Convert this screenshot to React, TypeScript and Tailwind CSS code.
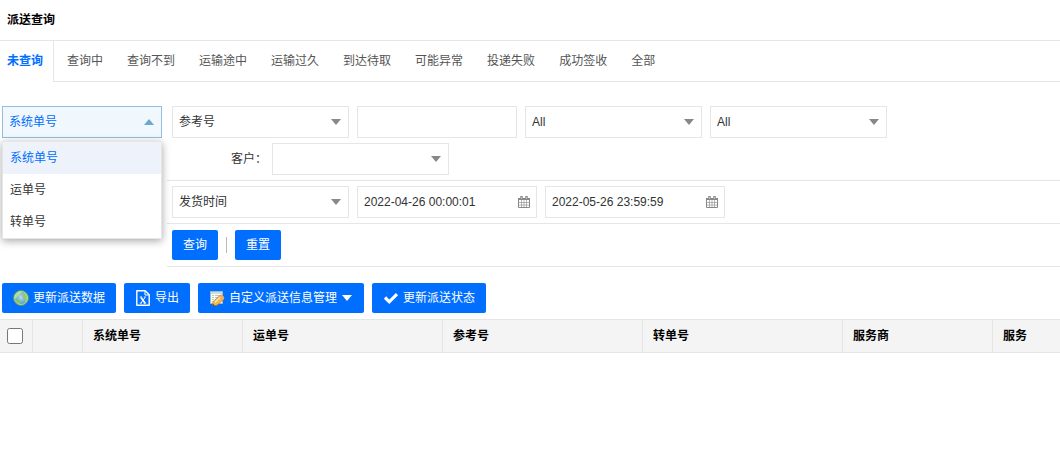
import React, { useState } from 'react';
import clsx from 'clsx';

const TABS = [
  '未查询',
  '查询中',
  '查询不到',
  '运输途中',
  '运输过久',
  '到达待取',
  '可能异常',
  '投递失败',
  '成功签收',
  '全部'
];

const ORDER_TYPES = ['系统单号', '运单号', '转单号'];

const COLUMNS = [
  { label: '系统单号', width: 'w-40' },
  { label: '运单号', width: 'w-[200px]' },
  { label: '参考号', width: 'w-[200px]' },
  { label: '转单号', width: 'w-[200px]' },
  { label: '服务商', width: 'w-[150px]' },
  { label: '服务', width: '' }
];

function Triangle({ up = false, className }: { up?: boolean; className?: string }) {
  return (
    <svg viewBox="0 0 10 6" className={clsx('w-2.5 h-1.5', className)} fill="currentColor" aria-hidden="true">
      <path d={up ? 'M5 0 10 6H0z' : 'M0 0h10L5 6z'} />
    </svg>
  );
}

function CalendarIcon() {
  return (
    <svg viewBox="0 0 12 12" className="size-3 text-[#888]" fill="none" stroke="currentColor" aria-hidden="true">
      <path d="M.5 2.5h11v9H.5z" />
      <path d="M0 3h12" strokeWidth="2" />
      <path d="M3.5 0v3M8.5 0v3" strokeWidth="2.4" />
      <path d="M3.5 1v2M8.5 1v2" stroke="#ddd" strokeWidth=".6" />
      <path d="M3.5 4v7.5M6 4v7.5M8.5 4v7.5M1 6.5h10M1 9h10" strokeWidth=".6" />
    </svg>
  );
}

function GlobeIcon() {
  return (
    <svg viewBox="0 0 16 16" className="size-4" aria-hidden="true">
      <defs>
        <radialGradient id="globe-sea" cx=".5" cy=".45" r=".6">
          <stop offset="0" stopColor="#b5dcf0" />
          <stop offset=".65" stopColor="#64a9cc" />
          <stop offset="1" stopColor="#3f88a0" />
        </radialGradient>
      </defs>
      <circle cx="8" cy="8" r="7.5" fill="url(#globe-sea)" stroke="#5c9a5a" />
      <path d="M2 5 4.5 2.2l3.600-.8.6 1.600-2 1.200-.6 1.800-2 .4-.8 1.600L1.700 9z" fill="#b3dc98" />
      <path d="m9.800 3.800 2.500-1 2 3 .4 3-1.500 3.500-1.200-.8-.5-2.500-1.700-.8-.6-2z" fill="#90cb76" />
      <path d="m3.200 9.500 2.800.2 1.700 1.600-1 2.900-2.200-.8-1.800-2.400z" fill="#86c46c" />
      <circle cx="8" cy="8" r="6.500" fill="none" stroke="#c9ecb4" strokeWidth=".9" opacity=".8" />
    </svg>
  );
}

function ExcelIcon() {
  return (
    <svg viewBox="0 0 16 16" className="size-4" fill="none" stroke="#fff" aria-hidden="true">
      <path d="M1.800.8h8.400l4 4v10.400H1.800z" strokeWidth="1.400" strokeLinejoin="round" />
      <path d="M10 1v4h4" strokeWidth="1" />
      <path d="m6 7.500 4 5.500" strokeWidth="1.700" />
      <path d="M10 7.500 6 13" strokeWidth="1" />
      <path d="M4.800 7h2.400M8.900 7h2M4.800 13.200h2M8.700 13.200h2.500" strokeWidth=".9" />
    </svg>
  );
}

function FormEditIcon() {
  return (
    <svg viewBox="0 0 16 16" className="size-4" aria-hidden="true">
      <path d="M1.500 1.500h12v12h-12z" fill="#f7faf8" stroke="#a5b8c0" />
      <path d="M2 2h11v2H2z" fill="#c9dde6" />
      <path d="M3 5.500h2M6 5.500h6M3 7.500h2M6 7.500h6M3 9.500h2M6 9.500h3M3 11.500h1" stroke="#b6cbbb" />
      <path d="M4 12 10.800 5.500q1.900-1.200 3.400.4t.6 3.300L8 15.300l-4.400.5z" fill="#f4b94a" stroke="#b07a35" strokeWidth=".7" />
      <path d="m5.700 12.500 6.100-5.700" stroke="#fde7a6" strokeWidth="1.500" />
      <path d="M11.200 5.400q1.700-1 3 .5t.6 3.200l-1 .9-3.400-3.800z" fill="#eda96f" />
      <path d="m3.600 15.800.3-2 1.700 1.800z" fill="#4b3423" />
    </svg>
  );
}

function CheckIcon() {
  return (
    <svg viewBox="0 0 16 16" className="size-4" fill="none" stroke="currentColor" aria-hidden="true">
      <path d="m2 7.500 4.300 4.300L14 4.100" strokeWidth="3.200" />
    </svg>
  );
}

interface SelectProps {
  id: string;
  label: string;
  options: string[];
}

function Select({ id, label, options }: SelectProps) {
  return (
    <div className="relative w-[177px]">
      <select
        id={id}
        aria-label={label}
        className="block w-full h-8 pl-1.5 pr-6 appearance-none bg-white border border-[#e6e6e6] text-[#333] outline-none"
      >
        {options.map((option, index) => (
          <option key={index}>{option}</option>
        ))}
      </select>
      <Triangle className="absolute right-2 top-[13px] text-[#888] pointer-events-none" />
    </div>
  );
}

function DateInput({ label, value }: { label: string; value: string }) {
  return (
    <div className="flex items-center w-[180px] h-8 px-1.5 border border-[#e6e6e6]">
      <input type="text" aria-label={label} defaultValue={value} className="flex-1 min-w-0 outline-none" />
      <button type="button" aria-label={`选择${label}`} className="cursor-pointer">
        <CalendarIcon />
      </button>
    </div>
  );
}

function ActionButton({ children }: { children: React.ReactNode }) {
  return (
    <button
      type="button"
      className="flex items-center gap-1 h-[30px] px-[11px] rounded-xs bg-[#006eff] text-white whitespace-nowrap cursor-pointer"
    >
      {children}
    </button>
  );
}

// Order number type, shown with its own option panel
function OrderTypeSelect() {
  const [open, setOpen] = useState(true);
  const [selected, setSelected] = useState(ORDER_TYPES[0]);

  return (
    <div className="relative w-40">
      <button
        type="button"
        aria-haspopup="listbox"
        aria-expanded={open}
        onClick={() => setOpen(!open)}
        className="flex items-center justify-between w-full h-8 pl-1.5 pr-[7px] border border-[#92bfdf] bg-[#f0f7fd] text-[#006eff] cursor-pointer"
      >
        {selected}
        <Triangle up={open} className="text-[#6ea6cd]" />
      </button>
      {open && (
        <ul
          role="listbox"
          aria-label="单号类型"
          className="absolute left-0 right-0 top-[35px] z-10 border border-[#e6e6e6] bg-white shadow-[0_2px_8px_rgba(0,0,0,0.35)]"
        >
          {ORDER_TYPES.map(type => (
            <li
              key={type}
              role="option"
              aria-selected={type === selected}
              onClick={() => {
                setSelected(type);
                setOpen(false);
              }}
              className={clsx(
                'h-8 px-[7px] leading-8 cursor-pointer',
                type === selected ? 'bg-[#eef3fb] text-[#006eff]' : 'text-[#333]'
              )}
            >
              {type}
            </li>
          ))}
        </ul>
      )}
    </div>
  );
}

export default function App() {
  const [activeTab, setActiveTab] = useState(TABS[0]);

  return (
    <main
      lang="zh-CN"
      className="min-h-screen bg-white text-xs text-[#333] font-['Liberation_Sans','Noto_Sans_CJK_SC',sans-serif]"
    >
      <h1 className="h-10 px-[7px] leading-10 font-bold text-black">派送查询</h1>

      {/* Status tabs */}
      <nav className="flex h-[41px] border-t border-[#e6e6e6]">
        {TABS.map((tab, index) => (
          <button
            key={tab}
            type="button"
            onClick={() => setActiveTab(tab)}
            className={clsx(
              'h-[41px] whitespace-nowrap cursor-pointer',
              index === 0 ? 'pl-[7px] pr-2.5' : 'pl-[13px] pr-[11px]',
              tab === activeTab
                ? 'pb-0.5 border-r border-[#e6e6e6] font-bold text-[#006eff]'
                : 'border-b border-[#e6e6e6] text-[#555]'
            )}
          >
            {tab}
          </button>
        ))}
        <div className="flex-1 h-[41px] border-b border-[#e6e6e6]" />
      </nav>

      {/* Search form */}
      <form className="flex mt-[25px]" onSubmit={event => event.preventDefault()}>
        <div className="w-[167px] shrink-0 pl-0.5">
          <OrderTypeSelect />
        </div>
        <div className="flex-1 min-w-0">
          <div className="flex flex-col gap-[5px] pl-[5px] pb-[5px] border-b border-[#e6e6e6]">
            <div className="flex flex-wrap gap-2">
              <Select id="reference" label="参考号" options={['参考号']} />
              <input
                type="text"
                aria-label="参考号"
                className="w-40 h-8 px-1.5 border border-[#e6e6e6] outline-none"
              />
              <Select id="provider" label="服务商" options={['All']} />
              <Select id="service" label="服务" options={['All']} />
            </div>
            <div className="flex items-center">
              <label htmlFor="customer" className="w-[100px] pr-[5px] text-right">
                客户：
              </label>
              <Select id="customer" label="客户" options={['']} />
            </div>
          </div>
          <div className="flex flex-wrap gap-2 pl-[5px] py-[5px] border-b border-[#e6e6e6]">
            <Select id="time-type" label="时间类型" options={['发货时间']} />
            <DateInput label="开始时间" value="2022-04-26 00:00:01" />
            <DateInput label="结束时间" value="2022-05-26 23:59:59" />
          </div>
          <div className="flex items-center gap-2 pl-[5px] py-1.5 border-b border-[#e6e6e6]">
            <ActionButton>查询</ActionButton>
            <span className="w-px h-4 bg-[#bbb]" />
            <ActionButton>重置</ActionButton>
          </div>
        </div>
      </form>

      {/* Toolbar */}
      <div className="flex flex-wrap gap-2 pt-4 pb-1.5 pl-0.5">
        <ActionButton>
          <GlobeIcon />
          更新派送数据
        </ActionButton>
        <ActionButton>
          <ExcelIcon />
          导出
        </ActionButton>
        <ActionButton>
          <FormEditIcon />
          自定义派送信息管理
          <Triangle className="mx-px" />
        </ActionButton>
        <ActionButton>
          <CheckIcon />
          更新派送状态
        </ActionButton>
      </div>

      <div className="overflow-x-auto">
        <table className="w-full min-w-[1056px] table-fixed border-separate border-spacing-0">
          <thead>
            <tr className="h-[34px] bg-[#f4f4f4] text-left text-black">
              <th className="w-[33px] pl-[7px] border-y border-r border-[#e6e6e6]">
                <input type="checkbox" aria-label="全选" className="block size-4" />
              </th>
              <th className="w-[50px] border-y border-r border-[#e6e6e6]" />
              {COLUMNS.map(({ label, width }) => (
                <th
                  key={label}
                  className={clsx('px-2.5 border-y border-[#e6e6e6] font-bold last:border-r-0 border-r', width)}
                >
                  {label}
                </th>
              ))}
            </tr>
          </thead>
          <tbody />
        </table>
      </div>
    </main>
  );
}
